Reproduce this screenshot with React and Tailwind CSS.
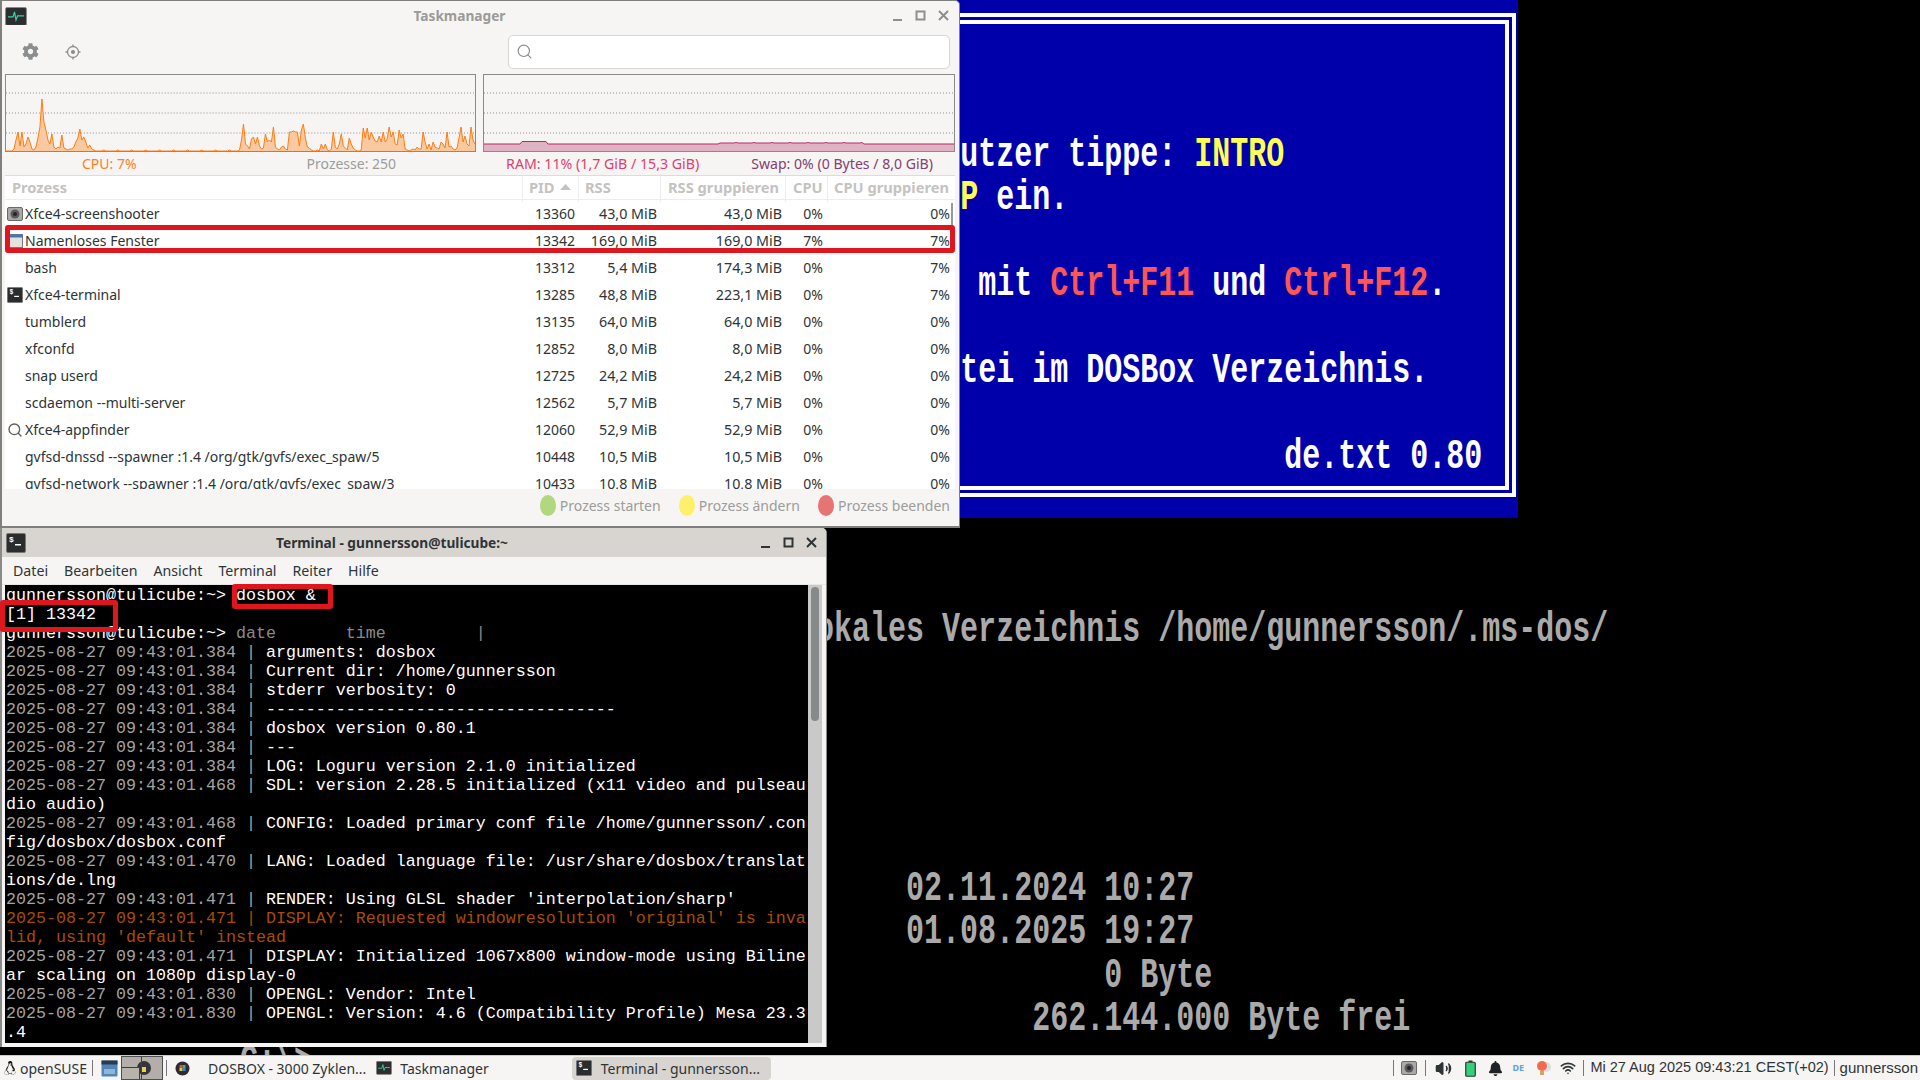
import React from 'react';
import { FaLinux, FaBell, FaCog } from 'react-icons/fa';
import { Search, Volume2, Wifi } from 'lucide-react';

const W = 'font-["Noto_Sans",sans-serif]';

const cpuA = [1,1,1,1,3,12,20,6,20,5,8,15,10,3,2,5,14,25,53,30,22,12,8,18,5,3,5,4,17,4,3,2,3,3,5,10,14,23,12,15,10,4,7,3,2,1];
const cpuFlat = Array.from({ length: 71 }, (_, i) => (i % 7 === 3 ? 2 : 1));
const cpuB = [2,12,28,8,6,3,13,15,8,15,6,3,4,18,10,12,10,25,5,3,2,5,6,3,2,20,20,21,20,20,6,22,28,14,5,4,2,1,1,2,1,8,3,8,2,1,3,20,5,3,8,18,6,4,2,14,8,4,2,1,1,2,24,14,24,12,20,15,11,10,16,10,20,10,13,25,15,20,8,7,22,14,18,3,2,1,2,3,2,5,3,3,20,10,3,8,2,10,5,4,3,10,8,4,20,5,6,3,2,4,14,25,10,16,8,6,25,12,8,7];
const cpu = [...cpuA, ...cpuFlat, ...cpuB];
const ram = Array.from({ length: 236 }, (_, i) => {
  if (i > 18 && i < 32) return 10.5;
  if (i >= 118 && i < 190) return i % 9 === 0 ? 9.5 : 9;
  return 8;
});

function Graph({ data, fill, line, step, cls }) {
  const pts = data.map((v, i) => `${i * step},${77 - v}`).join(' ');
  const end = (data.length - 1) * step;
  return (
    <div className={`h-[78px] border border-[#8a8a88] bg-[#f6f5f4] ${cls}`}>
      <svg width="100%" height="76" viewBox="0 0 470 76" preserveAspectRatio="none" className="block">
        {[18, 38, 58].map((y) => (
          <line key={y} x1="0" x2="470" y1={y} y2={y} stroke="#8f8f8d" strokeWidth="1" strokeDasharray="1 2" />
        ))}
        <polygon points={`0,77 ${pts} ${end},77`} fill={fill} />
        <polyline points={pts} fill="none" stroke={line} strokeWidth="1" />
      </svg>
    </div>
  );
}

function Controls({ color, pr }) {
  return (
    <div className={`flex items-center ${pr}`}>
      <svg width="23" height="16" viewBox="0 0 23 16"><rect x="7" y="11" width="9" height="2" fill={color} /></svg>
      <svg width="23" height="16" viewBox="0 0 23 16"><rect x="7.5" y="3.5" width="8" height="8" fill="none" stroke={color} strokeWidth="2" /></svg>
      <svg width="23" height="16" viewBox="0 0 23 16"><path d="M7 3 L16 12 M16 3 L7 12" stroke={color} strokeWidth="2" /></svg>
    </div>
  );
}

function MonitorIcon({ size = 22 }) {
  return (
    <svg width={size} height={size * 0.86} viewBox="0 0 22 19">
      <rect x="0.5" y="0.5" width="21" height="18" rx="1.5" fill="#2b2d2e" stroke="#8a8a88" />
      <path d="M3 10 H8 L9.5 5 L11 13 L12.5 9 H19" fill="none" stroke="#3fd0a0" strokeWidth="1.2" />
    </svg>
  );
}

function TermIcon({ size = 20 }) {
  return (
    <svg width={size} height={size} viewBox="0 0 20 20">
      <rect x="0.5" y="0.5" width="19" height="19" rx="1.5" fill="#2a2c2d" stroke="#777" />
      <text x="3" y="9" fontSize="8" fontWeight="700" fill="#fff" fontFamily="Liberation Mono">$</text>
      <rect x="9" y="11" width="6" height="1.5" fill="#fff" />
    </svg>
  );
}

function CamIcon({ size = 16 }) {
  return (
    <svg width={size} height={size} viewBox="0 0 16 16">
      <rect x="0.5" y="1.5" width="15" height="13" rx="1.5" fill="#a9a9a7" stroke="#6a6a68" />
      <circle cx="8" cy="8" r="4.5" fill="#5b5b5b" />
      <circle cx="8" cy="8" r="2" fill="#26202e" />
    </svg>
  );
}

function WinIcon() {
  return (
    <svg width="14" height="14" viewBox="0 0 14 14" className="ml-[2px]">
      <rect x="0.5" y="0.5" width="13" height="13" fill="#e2e2df" stroke="#77787a" />
      <rect x="0.5" y="0.5" width="13" height="3" fill="#3f78b4" />
    </svg>
  );
}

const procs = [
  ['Xfce4-screenshooter', '13360', '43,0 MiB', '43,0 MiB', '0%', '0%', 'cam'],
  ['Namenloses Fenster', '13342', '169,0 MiB', '169,0 MiB', '7%', '7%', 'win'],
  ['bash', '13312', '5,4 MiB', '174,3 MiB', '0%', '7%'],
  ['Xfce4-terminal', '13285', '48,8 MiB', '223,1 MiB', '0%', '7%', 'term'],
  ['tumblerd', '13135', '64,0 MiB', '64,0 MiB', '0%', '0%'],
  ['xfconfd', '12852', '8,0 MiB', '8,0 MiB', '0%', '0%'],
  ['snap userd', '12725', '24,2 MiB', '24,2 MiB', '0%', '0%'],
  ['scdaemon --multi-server', '12562', '5,7 MiB', '5,7 MiB', '0%', '0%'],
  ['Xfce4-appfinder', '12060', '52,9 MiB', '52,9 MiB', '0%', '0%', 'find'],
  ['gvfsd-dnssd --spawner :1.4 /org/gtk/gvfs/exec_spaw/5', '10448', '10,5 MiB', '10,5 MiB', '0%', '0%'],
  ['gvfsd-network --spawner :1.4 /org/gtk/gvfs/exec_spaw/3', '10433', '10,8 MiB', '10,8 MiB', '0%', '0%'],
];

const GRID = 'grid grid-cols-[517px_56px_82px_125px_42px_128px]';

function ProcIcon({ kind }) {
  if (kind === 'cam') return <CamIcon />;
  if (kind === 'win') return <WinIcon />;
  if (kind === 'term') return <TermIcon size={16} />;
  if (kind === 'find') return <Search size={16} strokeWidth={2} color="#5e5c58" />;
  return null;
}

function TaskManager() {
  return (
    <div className={`absolute left-0 top-0 w-[960px] h-[528px] flex flex-col bg-[#f6f5f4] border-l-2 border-t border-r border-b-2 border-[#7f7f7d] rounded-tr-[5px] overflow-hidden ${W}`}>
      <div className="h-[30px] flex items-center shrink-0">
        <div className="w-[31px] pl-[3px]"><MonitorIcon /></div>
        <div className="flex-1 text-center text-[13.7px] font-bold text-[#9a9a98]">Taskmanager</div>
        <Controls color="#8e8e8c" pr="pr-[4px]" />
      </div>
      <div className="h-[43px] shrink-0 flex items-center pb-[2px]">
        <FaCog size={17} color="#8b8e8f" className="ml-[20px]" />
        <svg width="16" height="16" viewBox="0 0 16 16" className="ml-[26px]" fill="none" stroke="#8b8e8f" strokeWidth="1.3">
          <circle cx="8" cy="8" r="5.5" />
          <circle cx="8" cy="8" r="1.4" fill="#8b8e8f" />
          <path d="M8 0.5V3 M8 13V15.5 M0.5 8H3 M13 8H15.5" />
        </svg>
        <div className="ml-[427px] w-[442px] h-[34px] bg-white border border-[#d9d5d0] rounded-[5px] flex items-center pl-[7px]">
          <Search size={17} strokeWidth={1.6} color="#8a8a88" />
        </div>
      </div>
      <div className="h-[78px] shrink-0 flex gap-[7px] pl-[3px]">
        <Graph data={cpu} step={2} fill="#fbc9a0" line="#ff7b12" cls="w-[471px]" />
        <Graph data={ram} step={2} fill="#dfb2c4" line="#b62a62" cls="w-[472px]" />
      </div>
      <div className="h-[23px] shrink-0 flex items-center text-[14px] whitespace-nowrap">
        <span className="ml-[80px] text-[#ff7f1e]">CPU: 7%</span>
        <span className="ml-[170px] text-[#9c9c9a]">Prozesse: 250</span>
        <span className="ml-[110px] text-[14.2px] text-[#df3d70]">RAM: 11% (1,7 GiB / 15,3 GiB)</span>
        <span className="ml-[52px] text-[14.1px] text-[#85406f]">Swap: 0% (0 Bytes / 8,0 GiB)</span>
      </div>
      <div className="relative h-[314px] shrink-0 ml-[3px] w-[950px] bg-white overflow-hidden">
        <div className={`${GRID} h-[25px] items-center border-t border-[#dedbd8] border-b border-b-[#efedeb] text-[14.67px] font-bold text-[#c4c3c0] whitespace-nowrap`}>
          <div className="pl-[7px] pb-[4px]">Prozess</div>
          <div className="pl-[6px] pb-[4px] h-full flex items-center border-l border-[#efedeb]">PID<svg width="11" height="6" viewBox="0 0 11 6" className="ml-[5px]"><path d="M0 6 L5.5 0 L11 6Z" fill="#c4c3c0" /></svg></div>
          <div className="pl-[6px] pb-[4px] h-full flex items-center border-l border-[#efedeb]">RSS</div>
          <div className="pl-[7px] pb-[4px] h-full flex items-center border-l border-[#efedeb]">RSS gruppieren</div>
          <div className="pl-[7px] pb-[4px] h-full flex items-center border-l border-[#efedeb]">CPU</div>
          <div className="pl-[6px] pb-[4px] h-full flex items-center border-l border-[#efedeb]">CPU gruppieren</div>
        </div>
        {procs.map((p) => (
          <div key={p[1]} className={`${GRID} h-[27px] items-center text-[14px] text-[#2e3436] whitespace-nowrap`}>
            <div className="flex items-center relative pl-[20px]">
              <span className="absolute left-[2px] top-1/2 -translate-y-1/2 flex"><ProcIcon kind={p[6]} /></span>
              {p[0]}
            </div>
            <div className="text-right pr-[3px]">{p[1]}</div>
            <div className="text-right pr-[3px] text-[14.3px]">{p[2]}</div>
            <div className="text-right pr-[3px] text-[14.3px]">{p[3]}</div>
            <div className="text-right pr-[4px]">{p[4]}</div>
            <div className="text-right pr-[5px]">{p[5]}</div>
          </div>
        ))}
        <div className="absolute right-[2px] top-[28px] w-[2px] h-[24px] bg-[#9a9a98]" />
        <div className="absolute left-0 right-0 top-[50px] h-[28px] border-[5px] border-[#e0161f] rounded-[3px]" />
      </div>
      <div className="flex-1 flex items-center justify-end pr-[9px] pb-[4px] text-[14px] text-[#9c9c9a] whitespace-nowrap">
        <span className="w-[16px] h-[21px] rounded-[50%] bg-[#b1d77f] mr-[4px]" />
        <span>Prozess starten</span>
        <span className="w-[16px] h-[21px] rounded-[50%] bg-[#fff06c] ml-[18px] mr-[4px]" />
        <span>Prozess ändern</span>
        <span className="w-[16px] h-[21px] rounded-[50%] bg-[#e77474] ml-[18px] mr-[4px]" />
        <span>Prozess beenden</span>
      </div>
    </div>
  );
}

const T1 = '2025-08-27 09:43:01.384 | ';
const T2 = '2025-08-27 09:43:01.468 | ';
const T3 = '2025-08-27 09:43:01.470 | ';
const T4 = '2025-08-27 09:43:01.471 | ';
const T5 = '2025-08-27 09:43:01.830 | ';
const termLines = [
  { msg: 'gunnersson@tulicube:~> dosbox &' },
  { msg: '[1] 13342' },
  { msg: 'gunnersson@tulicube:~> ', dim: 'date       time         |' },
  { ts: T1, msg: 'arguments: dosbox' },
  { ts: T1, msg: 'Current dir: /home/gunnersson' },
  { ts: T1, msg: 'stderr verbosity: 0' },
  { ts: T1, msg: '-----------------------------------' },
  { ts: T1, msg: 'dosbox version 0.80.1' },
  { ts: T1, msg: '---' },
  { ts: T1, msg: 'LOG: Loguru version 2.1.0 initialized' },
  { ts: T2, msg: 'SDL: version 2.28.5 initialized (x11 video and pulseau' },
  { msg: 'dio audio)' },
  { ts: T2, msg: 'CONFIG: Loaded primary conf file /home/gunnersson/.con' },
  { msg: 'fig/dosbox/dosbox.conf' },
  { ts: T3, msg: 'LANG: Loaded language file: /usr/share/dosbox/translat' },
  { msg: 'ions/de.lng' },
  { ts: T4, msg: "RENDER: Using GLSL shader 'interpolation/sharp'" },
  { warn: T4 + "DISPLAY: Requested windowresolution 'original' is inva" },
  { warn: "lid, using 'default' instead" },
  { ts: T4, msg: 'DISPLAY: Initialized 1067x800 window-mode using Biline' },
  { msg: 'ar scaling on 1080p display-0' },
  { ts: T5, msg: 'OPENGL: Vendor: Intel' },
  { ts: T5, msg: 'OPENGL: Version: 4.6 (Compatibility Profile) Mesa 23.3' },
  { msg: '.4' },
];

function Terminal() {
  return (
    <div className={`absolute left-0 top-[528px] w-[827px] h-[519px] flex flex-col bg-[#f6f5f4] border-l-2 border-r border-[#8a8a88] rounded-tr-[5px] overflow-hidden ${W}`}>
      <div className="h-[29px] shrink-0 flex items-center bg-[#d8d4d0]">
        <div className="w-[30px] pl-[4px]"><TermIcon /></div>
        <div className="flex-1 text-center text-[13.7px] font-bold text-[#2e3436] pt-[1px] pr-[2px]">Terminal - gunnersson@tulicube:~</div>
        <Controls color="#2e3436" pr="pr-[3px]" />
      </div>
      <div className="h-[28px] shrink-0 flex items-center pl-[11px] gap-[16px] text-[14.2px] text-[#2e3436] border-b border-[#e8e6e4]">
        <span>Datei</span><span>Bearbeiten</span><span>Ansicht</span><span>Terminal</span><span>Reiter</span><span>Hilfe</span>
      </div>
      <div className="h-[458px] shrink-0 flex pl-[3px] pr-[4px]">
        <div className="relative w-[803px] pl-[1px] pt-[1px] bg-black overflow-hidden font-['Liberation_Mono',monospace] text-[16.67px] leading-[19px] text-white whitespace-pre">
          {termLines.map((l, i) => (
            <div key={i} className="h-[19px]">
              {l.ts && <span className="text-[#a3a3a3]">{l.ts}</span>}
              {l.warn && <span className="text-[#a84d00]">{l.warn}</span>}
              {l.msg}
              {l.dim && <span className="text-[#8a8a8a]">{l.dim}</span>}
            </div>
          ))}
        </div>
        <div className="w-[14px] bg-[#c9c9c9] pt-[2px] flex justify-center">
          <div className="w-[8px] h-[134px] rounded-[4px] bg-[#878a8a]" />
        </div>
      </div>
    </div>
  );
}

const sp = (n) => ' '.repeat(n);

function DosScreen() {
  return (
    <div className="absolute left-[240px] top-0 w-[1440px] h-[1080px]">
      <div className="absolute left-[162px] top-0 w-[1116px] h-[518px] bg-[#0000aa]">
        <div className="absolute left-0 right-[2px] top-[13px] h-[484px] border-[11px] border-double border-white" />
      </div>
      <pre className="relative mt-[3px] origin-top scale-y-[1.44] font-['Liberation_Mono',monospace] font-bold text-[30px] leading-[30px] text-[#aaaaaa] whitespace-pre">
        <div className="h-[30px]" />
        <div className="h-[30px]" />
        <div className="h-[30px]" />
        <div className="h-[30px] text-white">{sp(40)}utzer tippe: <span className="text-[#ffff55]">INTRO</span></div>
        <div className="h-[30px] text-white">{sp(40)}<span className="text-[#ffff55]">P</span> ein.</div>
        <div className="h-[30px]" />
        <div className="h-[30px] text-white">{sp(41)}mit <span className="text-[#ff5555]">Ctrl+F11</span> und <span className="text-[#ff5555]">Ctrl+F12</span>.</div>
        <div className="h-[30px]" />
        <div className="h-[30px] text-white">{sp(40)}tei im DOSBox Verzeichnis.</div>
        <div className="h-[30px]" />
        <div className="h-[30px] text-white">{sp(58)}de.txt 0.80</div>
        <div className="h-[30px]" />
        <div className="h-[30px]" />
        <div className="h-[30px]" />
        <div className="h-[30px]">{sp(31)}Lokales Verzeichnis /home/gunnersson/.ms-dos/</div>
        <div className="h-[30px]" />
        <div className="h-[30px]" />
        <div className="h-[30px]" />
        <div className="h-[30px]" />
        <div className="h-[30px]" />
        <div className="h-[30px]">{sp(37)}02.11.2024 10:27</div>
        <div className="h-[30px]">{sp(37)}01.08.2025 19:27</div>
        <div className="h-[30px]">{sp(48)}0 Byte</div>
        <div className="h-[30px]">{sp(44)}262.144.000 Byte frei</div>
        <div className="h-[30px]">{'C:\\>'}</div>
      </pre>
    </div>
  );
}

function Sep({ cls = '' }) {
  return <div className={`w-[1px] h-[16px] bg-[#77767b] ${cls}`} />;
}

function Taskbar() {
  return (
    <div className={`relative h-[25px] shrink-0 flex items-center bg-[#f6f5f4] border-t border-[#cfcdca] text-[14px] text-[#2e3436] whitespace-nowrap ${W}`}>
      <FaLinux size={14} color="#111" className="ml-[3px]" />
      <span className="ml-[3px]">openSUSE</span>
      <Sep cls="ml-[5px]" />
      <svg width="17" height="17" viewBox="0 0 17 17" className="ml-[8px]">
        <rect x="0.5" y="0.5" width="16" height="16" rx="1" fill="#4f85b8" />
        <rect x="0.5" y="0.5" width="16" height="4" fill="#2a3b4c" />
        <rect x="3" y="9" width="11" height="5" fill="#8eb6d6" />
      </svg>
      <svg width="42" height="24" viewBox="0 0 42 24" className="ml-[3px]">
        <rect x="0.5" y="0.5" width="41" height="23" fill="#b3afa8" stroke="#4f4f4f" />
        <circle cx="23" cy="12" r="7" fill="#34343c" />
        <rect x="20" y="11" width="5" height="5" fill="#e8d24a" />
        <rect x="1" y="12" width="17" height="11" fill="#b8b4ad" />
        <path d="M20.5 0.5 V23.5 M0.5 11.5 H18.5 V23" fill="none" stroke="#3f3f3f" strokeWidth="1" />
      </svg>
      <Sep cls="ml-[3px]" />
      <svg width="15" height="17" viewBox="0 0 15 17" className="ml-[8px]">
        <circle cx="7.5" cy="8.5" r="7" fill="#2e2a33" />
        <rect x="4.5" y="5" width="3" height="3" fill="#e74c3c" />
        <rect x="7.5" y="5" width="3" height="3" fill="#4caf50" />
        <rect x="4.5" y="8" width="3" height="3" fill="#f1c40f" />
        <rect x="7.5" y="8" width="3" height="3" fill="#3584e4" />
      </svg>
      <span className="ml-[18px]">DOSBOX - 3000 Zyklen...</span>
      <span className="ml-[10px] flex"><MonitorIcon size={16} /></span>
      <span className="ml-[8px]">Taskmanager</span>
      <div className="ml-[83px] w-[199px] h-[23px] flex items-center bg-[#d8d4d0] rounded-[4px] pl-[4px]">
        <TermIcon size={16} />
        <span className="ml-[9px]">Terminal - gunnersson...</span>
      </div>
      <div className="flex-1" />
      <Sep />
      <span className="ml-[7px] flex"><CamIcon /></span>
      <Sep cls="ml-[8px]" />
      <Volume2 size={17} strokeWidth={2} color="#2e3436" fill="#2e3436" className="ml-[9px]" />
      <svg width="11" height="17" viewBox="0 0 11 17" className="ml-[13px]">
        <rect x="3.5" y="0.5" width="4" height="2" fill="#2e3436" />
        <rect x="0.75" y="2.25" width="9.5" height="14" rx="1" fill="#33d17a" stroke="#2e3436" strokeWidth="1.2" />
      </svg>
      <FaBell size={15} color="#1f2224" className="ml-[12px]" />
      <span className="ml-[9px] w-[14px] font-bold text-[9px] text-[#62a0ea]">DE</span>
      <svg width="16" height="17" viewBox="0 0 16 17" className="ml-[10px]">
        <circle cx="10" cy="7" r="5" fill="#ddd" />
        <circle cx="6" cy="6" r="5" fill="#f26a4f" />
        <rect x="4" y="11" width="4" height="4" fill="#c9a86a" />
      </svg>
      <Wifi size={16} strokeWidth={2.4} color="#2e3436" className="ml-[8px]" />
      <Sep cls="ml-[7px]" />
      <span className="ml-[6px] font-['Liberation_Sans',sans-serif] text-[14.5px]">Mi 27 Aug 2025 09:43:21 CEST(+02)</span>
      <Sep cls="ml-[5px]" />
      <span className="ml-[5px] mr-[2px] font-['Liberation_Sans',sans-serif] text-[15px]">gunnersson</span>
    </div>
  );
}

export default function App() {
  return (
    <div className="w-[1920px] h-[1080px] flex flex-col bg-black overflow-hidden">
      <div className="relative flex-1 overflow-hidden">
        <DosScreen />
        <TaskManager />
        <Terminal />
        <div className="absolute left-0 top-[600px] w-[118px] h-[32px] border-[5px] border-[#e0161f] rounded-[3px]" />
        <div className="absolute left-[232px] top-[584px] w-[101px] h-[25px] border-[5px] border-[#e0161f] rounded-[3px]" />
      </div>
      <Taskbar />
    </div>
  );
}
